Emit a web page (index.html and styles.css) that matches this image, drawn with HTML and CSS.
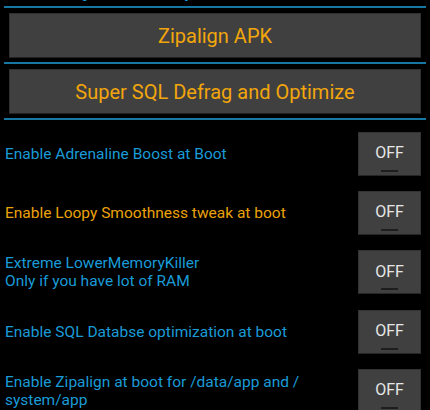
FILE: index.html
```html
<!DOCTYPE html>
<html>
<head>
<meta charset="utf-8">
<link rel="stylesheet" href="styles.css">
</head>
<body>
<div class="page">
  <div class="header"><span class="header-text">Memory Tweaks Optimizer</span></div>
  <div class="sep"></div>
  <div class="btn-wrap"><div class="big-btn">Zipalign APK</div></div>
  <div class="sep"></div>
  <div class="btn-wrap"><div class="big-btn">Super SQL Defrag and Optimize</div></div>
  <div class="sep"></div>
  <div class="list">
    <div class="row">
      <div class="label blue">Enable Adrenaline Boost at Boot</div>
      <div class="toggle"><span>OFF</span><i class="ind"></i></div>
    </div>
    <div class="row">
      <div class="label orange">Enable Loopy Smoothness tweak at boot</div>
      <div class="toggle"><span>OFF</span><i class="ind"></i></div>
    </div>
    <div class="row">
      <div class="label blue">Extreme LowerMemoryKiller<br>Only if you have lot of RAM</div>
      <div class="toggle"><span>OFF</span><i class="ind"></i></div>
    </div>
    <div class="row">
      <div class="label blue">Enable SQL Databse optimization at boot</div>
      <div class="toggle"><span>OFF</span><i class="ind"></i></div>
    </div>
    <div class="row">
      <div class="label blue">Enable Zipalign at boot for /data/app and /<br>system/app</div>
      <div class="toggle"><span>OFF</span><i class="ind"></i></div>
    </div>
  </div>
</div>
</body>
</html>
```

FILE: styles.css
```css
html, body {
  margin: 0;
  padding: 0;
  background: #000;
  width: 430px;
  height: 410px;
  overflow: hidden;
  font-family: Roboto, "Noto Sans", sans-serif;
}
.page {
  display: flex;
  flex-direction: column;
}
.header {
  height: 6px;
  overflow: hidden;
  padding-left: 18px;
}
.header-text {
  display: block;
  color: #1a9bd7;
  font-size: 20px;
  line-height: 20px;
  margin-top: -20px;
  font-weight: 500;
}
.sep {
  height: 2px;
  background: #1677a3;
  margin: 0 4px;
}
.btn-wrap {
  padding: 5px 9px 4px 9px;
}
.big-btn {
  height: 43px;
  background: #404040;
  border: 1px solid #303030;
  border-bottom-color: #222;
  color: #f2a60c;
  font-size: 20px;
  display: flex;
  align-items: center;
  justify-content: center;
}
.list {
  padding-top: 4px;
}
.row {
  height: 59.3px;
  display: flex;
  align-items: center;
  justify-content: space-between;
  padding: 0 9px 0 5px;
}
.label {
  font-size: 15.5px;
  line-height: 18px;
}
.blue { color: #1a9bd7; }
.orange { color: #eba20a; }
.toggle {
  width: 61px;
  height: 42px;
  background: #404040;
  border: 1px solid #333;
  border-bottom-color: #262626;
  display: flex;
  align-items: center;
  justify-content: center;
  position: relative;
  flex-shrink: 0;
}
.toggle span {
  color: #e6e6e6;
  font-size: 16px;
  margin-top: -2px;
}
.ind {
  position: absolute;
  left: 22px;
  bottom: 3px;
  width: 17px;
  height: 2px;
  background: #1e1e1e;
}
```
